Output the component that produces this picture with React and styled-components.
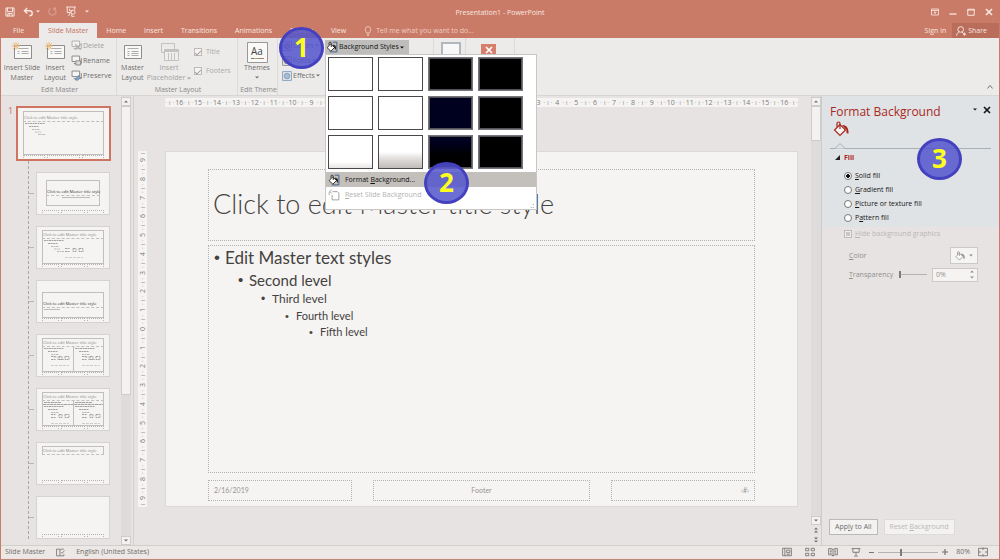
import { useState } from 'react';
import styled, { createGlobalStyle, css } from 'styled-components';

const TABS = ['File', 'Slide Master', 'Home', 'Insert', 'Transitions', 'Animations', 'Review', 'View'];

const SWATCHES = [
  '#fff', '#fff', '#000', '#000',
  '#fff', '#fff', '#00001f', '#000',
  'linear-gradient(#fff 80%, #e8e6e4)',
  'linear-gradient(#fff 50%, #e2dfdc 70%, #bfbcb9)',
  'linear-gradient(#00001f 20%, #000 60%)',
  '#000',
];

const FILLS = [
  ['', 'S', 'olid fill'],
  ['', 'G', 'radient fill'],
  ['', 'P', 'icture or texture fill'],
  ['P', 'a', 'ttern fill'],
];

const LAYOUTS = ['title', 'content', 'section', 'two', 'compare', 'titleOnly', 'blank'];

const TICK = '·\u00a0ı\u00a0·';

const range = (n) => Array.from({ length: n * 2 + 1 }, (_, i) => Math.abs(n - i));

/* Icons */

const Svg = ({ size = 14, w, h, box = '0 0 16 16', children, ...rest }) => (
  <svg width={w || size} height={h || size} viewBox={box} fill="none" stroke="currentColor" aria-hidden="true" {...rest}>
    {children}
  </svg>
);

const SaveIcon = () => (
  <Svg size={10} strokeWidth="1.6">
    <path d="M1.5 1.5h13v13h-13zM4 1.5v6h8v-6M4.5 14.5v-4h7v4M7 11v3" />
  </Svg>
);

const UndoIcon = () => (
  <Svg w={11} h={10} strokeWidth="2.2">
    <path d="M6 1.5L1.5 6 6 10.5M1.5 6h8c6 0 6 8 0 8" />
  </Svg>
);

const RedoIcon = () => (
  <Svg size={9} strokeWidth="1.8" opacity="0.35">
    <path d="M11 2.5a6.5 6.5 0 1 1-6.5 0M10.5 6V2h4" />
  </Svg>
);

const ShowIcon = () => (
  <Svg w={12} h={11} strokeWidth="1.4">
    <path d="M1 1.5h14M2.5 1.5v8h5M13.5 1.5v4M7 9.5l-2.5 5M6 4v3h4" />
    <circle cx="11" cy="9" r="3" />
    <path d="M9 12v3h4" />
  </Svg>
);

const BulbIcon = () => (
  <Svg size={10} strokeWidth="1.4">
    <path d="M5.5 11C5.5 9 3.5 8 3.5 5.5a4.5 4.5 0 0 1 9 0C12.5 8 10.5 9 10.5 11zM6 13h4M6.5 15h3" />
  </Svg>
);

const PersonIcon = () => (
  <Svg size={10} strokeWidth="1.6">
    <circle cx="7.5" cy="5.5" r="4.5" />
    <path d="M1 15.5c0-3 2-5.5 4.5-6M9.5 9.5l3 3M11 13h5M13.5 10.5v5" />
  </Svg>
);

const BucketIcon = ({ size = 12, edge = '#222', fill = '#fff', tip = '#1d1d1d' }) => (
  <Svg size={size} stroke={edge} strokeWidth="1.2">
    <path d="M7 3.5L1.5 9 7 14.5 12.5 9z" fill={fill} />
    <path d="M7 8V2.500c0-2-3-2-3 0v3.5" />
    <path d="M9 4c4 0 7 2.500 6.500 8.500-2 .5-2.500-1.500-2-3.500z" fill={tip} stroke="none" />
  </Svg>
);

const StylesIcon = () => (
  <Svg size={12} stroke="#333" strokeWidth="1.3">
    <path d="M9 1.5h5.5v13H5" stroke="#3f5f88" />
    <path d="M6 4L1.5 9 6.500 13.5 11.5 8.500z" fill="#fff" />
    <path d="M7 8V3c0-2-3-2-3 0v2" />
    <path d="M9 5c4 0 5 3 4 7l-2-3z" fill="#222" stroke="none" />
  </Svg>
);

const ResetIcon = () => (
  <Svg size={12} stroke="#9c9a99" strokeWidth="1.2">
    <path d="M6 3.5h6.5l2 2v9h-9V8M5 1L2.5 3.5 5 6M2.5 3.5C1 5 1 7 2.5 8.5" />
  </Svg>
);

const SlideIcon = ({ spark, lines = 3 }) => (
  <Svg w={21} h={19} box="0 0 21 19" stroke="#8f8d8b">
    <path d="M2.5 3.5h17v13h-17z" fill="#f8f8f7" />
    <path d="M5.5 6.5h11M5.5 9.5h2M9.5 9.5h7M5.5 11.5h2M9.5 11.5h7" opacity=".7" />
    {lines > 3 && <path d="M5.5 13.5h2M9.5 13.5h7" opacity=".7" />}
    {spark && <path d="M4 0v8M0 4h8M1 1l6 6M7 1L1 7" stroke="#eab978" />}
  </Svg>
);

const PlaceholderIcon = () => (
  <Svg w={21} h={19} box="0 0 21 19" stroke="#a9a7a5">
    <path d="M2.5 1.5h13v7M2.5 1.5v9h3" />
    <path d="M5.5 7.5h14v11h-14z" fill="#f2f1f0" />
    <path d="M5.5 9h14" strokeWidth="2" />
    <path d="M9.5 11v7M12.5 11v7M15.5 11v7" />
  </Svg>
);

const ThemesIcon = () => (
  <Svg w={21} h={21} box="0 0 21 21" stroke="#9a9896">
    <path d="M.5.5h20v20H.5z" fill="#f9f9f8" />
    <path d="M4 16.5h3" stroke="#777" />
    <path d="M7 16.5h3" stroke="#d69a63" />
    <path d="M10 16.5h3" stroke="#7d9b73" />
    <path d="M13 16.5h4" stroke="#b77" />
  </Svg>
);

const SmallIcon = ({ kind }) => (
  <Svg size={11} stroke="#8a8886" strokeWidth="1.4">
    <path d="M1.5 1.5h11v8h-11z" fill="#f6f5f4" />
    <path d="M4 12.5h11v-8" />
    {kind === 'delete' && <path d="M6 6l8 8M14 6l-8 8" strokeWidth="2" />}
    {kind === 'rename' && <path d="M7 8.5h7v6H7z" fill="#ddd" />}
    {kind === 'preserve' && <path d="M6 14l5-6 3 3-5 4z" fill="#86a9c9" stroke="#5f86ad" />}
  </Svg>
);

const EffectsIcon = ({ color = '#7f9cc0' }) => (
  <Svg size={10} stroke={color} strokeWidth="1.5">
    <path d="M1 1h14v14H1z" />
    <circle cx="8" cy="8" r="4.5" fill={color} fillOpacity=".6" />
  </Svg>
);

const WindowIcon = ({ kind }) => (
  <Svg size={8} strokeWidth="2.6">
    {kind === 'min' && <path d="M1 12h14" />}
    {kind === 'max' && <path d="M1.5 2.5h13v12h-13zM1 4h14" strokeWidth="2" />}
    {kind === 'close' && <path d="M2 2l12 12M14 2L2 14" strokeWidth="3.4" />}
    {kind === 'ribbon' && <path d="M1 2h14v12H1zM1 5h14M8 12V7.5M5.5 10L8 7.5l2.5 2.5" strokeWidth="1.7" />}
  </Svg>
);

const ViewIcon = ({ kind }) => (
  <Svg size={10} strokeWidth="1.3">
    {kind === 'normal' && <path d="M1 2h14v12H1zM4.5 2v12M7.5 5h5v4h-5zM7 11.5h6" />}
    {kind === 'sorter' && <path d="M1 2h5v4H1zM10 2h5v4h-5zM1 10h5v4H1zM10 10h5v4h-5z" />}
    {kind === 'reading' && <path d="M8 4v11M1 2.5h4L8 4l3-1.5h4v10h-4L8 14l-3-1.5H1zM3 5h3M3 7.5h3M3 10h3M10 5h3M10 7.5h3M10 10h3" />}
    {kind === 'show' && <path d="M1 2.5h14M3 2.5v6h10v-6M8 8.5v5M5 14.5h6" />}
    {kind === 'fit' && <path d="M1 2h14v12H1zM8 1v4M8 11v4M1 8h4M11 8h4" />}
  </Svg>
);

const BookIcon = () => (
  <Svg size={9} strokeWidth="1.4">
    <path d="M1 2h6v12H1zM7 4l2-2h5M7 14h7v-3M9 7.5l2 2 4-5" />
  </Svg>
);

const Caret = ({ up }) => (
  <Svg w={4} h={3} box="0 0 8 6" fill="currentColor" stroke="none">
    <path d={up ? 'M0 5h8L4 1z' : 'M0 1h8L4 5z'} />
  </Svg>
);

/* Slide thumbnails */

const ThumbLines = ({ kind }) => {
  if (kind === 'title' || kind === 'section') {
    return (
      <Svg w={60} h={4} box="0 0 60 4" stroke="#bbb">
        <path d={kind === 'title' ? 'M15 1.5h28' : 'M1 1.5h16'} />
      </Svg>
    );
  }
  const narrow = kind === 'two' || kind === 'compare';
  return (
    <Svg w={narrow ? 30 : 60} h={24} box={narrow ? '0 0 30 24' : '0 0 60 24'} stroke="#a5a3a1">
      {kind === 'compare' && <path d="M1 1.5h17M0 3.5h32" strokeDasharray="3 .5" />}
      <g transform={kind === 'compare' ? 'translate(0 4)' : ''}>
        <path d="M1 1.5h20M5 4.5h10" strokeDasharray="2 .5" />
        <path d="M8 7.5h8" opacity=".7" strokeDasharray="2 .5" />
        {kind !== 'compare' && <path d="M11 10h6M14 12.5h7" opacity=".7" strokeDasharray="2 .5" />}
        {kind !== 'master' && (
          <g transform={narrow ? 'translate(-14 0)' : ''}>
            <path d="M22 9.5h5M22 12.5h5M30 9.5h3v3h-3zM36 9.5h4v3h-4z" strokeDasharray="2 .5" />
            <path d="M22 18.5h18" opacity=".5" strokeDasharray="3 1" />
          </g>
        )}
      </g>
    </Svg>
  );
};

const Thumbnail = ({ kind, selected }) => (
  <ThumbSlide $selected={selected} $kind={kind}>
    {kind !== 'blank' && <ThumbTitle $kind={kind}>Click to edit Master title style</ThumbTitle>}
    {kind === 'titleOnly' || kind === 'blank' ? <ThumbGap /> : (
      <ThumbBody $kind={kind}>
        <ThumbBox><ThumbLines kind={kind} /></ThumbBox>
        {(kind === 'two' || kind === 'compare') && <ThumbBox><ThumbLines kind={kind} /></ThumbBox>}
      </ThumbBody>
    )}
    <ThumbFooter><i /><i /><i /></ThumbFooter>
  </ThumbSlide>
);

const Ruler = ({ count, vertical }) => (
  <RulerBar $vertical={vertical}>
    {range(count).flatMap((n, i) => [
      <RulerTick key={`tick${i}`}>{TICK}</RulerTick>,
      <RulerUnit key={i}>{n}</RulerUnit>,
    ])}
    <RulerTick>{TICK}</RulerTick>
  </RulerBar>
);

const ScrollBar = ({ thumb, paging }) => (
  <ScrollTrack>
    <ScrollButton aria-label="Scroll up"><Caret up /></ScrollButton>
    <ScrollThumb $size={thumb} />
    <ScrollSpace $size={100 - thumb} />
    <ScrollButton aria-label="Scroll down"><Caret /></ScrollButton>
    {paging && (
      <>
        <PageButton aria-label="Previous slide"><Caret up /><Caret up /></PageButton>
        <PageButton aria-label="Next slide"><Caret /><Caret /></PageButton>
      </>
    )}
  </ScrollTrack>
);

const App = () => {
  const [tab, setTab] = useState('Slide Master');
  const [fill, setFill] = useState(0);

  return (
    <>
      <GlobalStyle />
      <Window>
        <TitleBar>
          <QuickAccess>
            <IconButton aria-label="Save"><SaveIcon /></IconButton>
            <IconButton aria-label="Undo"><UndoIcon /><Caret /></IconButton>
            <IconButton aria-label="Redo"><RedoIcon /></IconButton>
            <IconButton aria-label="Start from beginning"><ShowIcon /></IconButton>
            <IconButton aria-label="Customize"><Caret /></IconButton>
          </QuickAccess>
          <DocTitle>Presentation1 - PowerPoint</DocTitle>
          <WindowButtons>
            {['ribbon', 'min', 'max', 'close'].map((kind) => (
              <IconButton key={kind} aria-label={kind}><WindowIcon kind={kind} /></IconButton>
            ))}
          </WindowButtons>
        </TitleBar>

        <TabBar>
          {TABS.map((name) => (
            <Tab key={name} $active={name === tab} onClick={() => setTab(name)}>{name}</Tab>
          ))}
          <TellMe><BulbIcon />Tell me what you want to do...</TellMe>
          <SignIn>Sign in</SignIn>
          <Share><PersonIcon />Share</Share>
        </TabBar>

        <Ribbon>
          <Group $width={116}>
            <GroupBody>
              <BigButton $width={38}><SlideIcon spark /><span>Insert Slide<br />Master</span></BigButton>
              <BigButton $width={28}><SlideIcon spark /><span>Insert<br />Layout</span></BigButton>
              <Stack>
                <SmallButton disabled><SmallIcon kind="delete" />Delete</SmallButton>
                <SmallButton><SmallIcon kind="rename" />Rename</SmallButton>
                <SmallButton><SmallIcon kind="preserve" />Preserve</SmallButton>
              </Stack>
            </GroupBody>
            <GroupName>Edit Master</GroupName>
          </Group>
          <Group $width={121}>
            <GroupBody>
              <BigButton $width={27}><SlideIcon lines={4} /><span>Master<br />Layout</span></BigButton>
              <BigButton $width={46} disabled><PlaceholderIcon /><span>Insert<br />Placeholder <Caret /></span></BigButton>
              <Checks>
                <CheckLabel><input type="checkbox" defaultChecked disabled />Title</CheckLabel>
                <CheckLabel><input type="checkbox" defaultChecked disabled />Footers</CheckLabel>
              </Checks>
            </GroupBody>
            <GroupName>Master Layout</GroupName>
          </Group>
          <Group $width={40}>
            <GroupBody>
              <BigButton $width={34}>
                <ThemeTile><ThemesIcon /><b>Aa</b></ThemeTile>
                <span>Themes</span>
                <ThemeCaret><Caret /></ThemeCaret>
              </BigButton>
            </GroupBody>
            <GroupName>Edit Theme</GroupName>
          </Group>
          <Group $width={156}>
            <GroupBody>
              <ThemeStack>
                <SmallButton><EffectsIcon color="#a86f86" />Colors <Caret /></SmallButton>
                <SmallButton><EffectsIcon color="#8b8a98" />Fonts <Caret /></SmallButton>
                <SmallButton><EffectsIcon />Effects <Caret /></SmallButton>
                <Badge $left={-1} $top={-13}>1</Badge>
              </ThemeStack>
              <MenuAnchor>
                <StylesButton><StylesIcon />Background Styles <Caret /></StylesButton>
                <Menu>
                  <SwatchGrid>
                    {SWATCHES.map((bg, i) => (
                      <Swatch key={i} $bg={bg} $dark={i % 4 > 1} aria-label={`Style ${i + 1}`} />
                    ))}
                  </SwatchGrid>
                  <MenuItem $active>
                    <StylesIcon /><span>Format <u>B</u>ackground...</span>
                    <Badge $left={98} $top={-10}>2</Badge>
                  </MenuItem>
                  <MenuItem disabled><ResetIcon /><span><u>R</u>eset Slide Background</span></MenuItem>
                  <Grip>.:</Grip>
                </Menu>
              </MenuAnchor>
            </GroupBody>
          </Group>
          <Group $width={32}>
            <SizeIcon />
          </Group>
          <Group $width={49}>
            <CloseMaster aria-label="Close Master View"><WindowIcon kind="close" /></CloseMaster>
          </Group>
          <Collapse aria-label="Collapse the ribbon">
            <Svg size={6} strokeWidth="2.6"><path d="M1 12l7-8 7 8" /></Svg>
          </Collapse>
        </Ribbon>

        <Work>
          <Thumbs>
            <ThumbNumber>1</ThumbNumber>
            <ThumbList>
              <Thumbnail kind="master" selected />
              <Tree>
                {LAYOUTS.map((kind) => <Branch key={kind}><Thumbnail kind={kind} /></Branch>)}
              </Tree>
            </ThumbList>
          </Thumbs>
          <ScrollBar thumb={67} />
          <Divider />

          <Canvas>
            <Ruler count={16} />
            <SlideRow>
              <Ruler count={9} vertical />
              <Slide>
                <TitleBox>Click to edit Master title style</TitleBox>
                <BodyBox>
                  <Level $size={17} $line={24} $indent={0}>Edit Master text styles</Level>
                  <Level $size={15} $line={20} $indent={24}>Second level</Level>
                  <Level $size={12} $line={18} $indent={47}>Third level</Level>
                  <Level $size={11} $line={16} $indent={71}>Fourth level</Level>
                  <Level $size={11} $line={16} $indent={95}>Fifth level</Level>
                </BodyBox>
                <FooterRow>
                  <FooterBox $align="left">2/16/2019</FooterBox>
                  <FooterBox $align="center">Footer</FooterBox>
                  <FooterBox $align="right">‹#›</FooterBox>
                </FooterRow>
              </Slide>
            </SlideRow>
          </Canvas>
          <ScrollBar thumb={8} paging />

          <Panel>
            <PanelTop>
              <PanelHeader>
                <h2>Format Background</h2>
                <IconButton aria-label="Task pane options"><Caret /></IconButton>
                <IconButton aria-label="Close"><WindowIcon kind="close" /></IconButton>
              </PanelHeader>
              <PanelTab aria-label="Fill"><BucketIcon size={16} edge="#a8281c" fill="#f4f4f4" tip="#a8281c" /></PanelTab>
              <PanelRule>
                <Svg w={10} h={6} box="0 0 10 6" stroke="#a9b0b5"><path d="M0 5.5l5-5 5 5" fill="#e0e3e6" /></Svg>
              </PanelRule>
              <SectionTitle>
                <Svg size={5} box="0 0 5 5" fill="#222" stroke="none"><path d="M5 0v5H0z" /></Svg>
                Fill
              </SectionTitle>
              {FILLS.map(([before, key, after], i) => (
                <RadioLabel key={i}>
                  <input type="radio" name="fill" checked={fill === i} onChange={() => setFill(i)} />
                  <span>{before}<u>{key}</u>{after}</span>
                </RadioLabel>
              ))}
              <Badge $left={95} $top={42}>3</Badge>
            </PanelTop>
            <HideLabel>
              <input type="checkbox" disabled />
              <span><u>H</u>ide background graphics</span>
            </HideLabel>
            <Field>
              <span><u>C</u>olor</span>
              <ColorButton aria-label="Color"><BucketIcon size={10} edge="#8b8987" tip="#8b8987" /><Caret /></ColorButton>
            </Field>
            <Field>
              <label htmlFor="transparency"><u>T</u>ransparency</label>
              <Slider id="transparency" type="range" defaultValue="0" />
              <Spin>
                <input aria-label="Transparency value" defaultValue="0%" />
                <SpinArrows><Caret up /><Caret /></SpinArrows>
              </Spin>
            </Field>
            <PanelButtons>
              <PanelButton>App<u>l</u>y to All</PanelButton>
              <PanelButton disabled>Reset <u>B</u>ackground</PanelButton>
            </PanelButtons>
          </Panel>
        </Work>

        <StatusBar>
          <span>Slide Master</span>
          <BookIcon />
          <span>English (United States)</span>
          <StatusRight>
            <Views>
              {['normal', 'sorter', 'reading', 'show'].map((kind) => (
                <IconButton key={kind} aria-label={kind}><ViewIcon kind={kind} /></IconButton>
              ))}
            </Views>
            <Zoom>
              <IconButton aria-label="Zoom out"><Svg size={5} strokeWidth="3"><path d="M0 8h16" /></Svg></IconButton>
              <Slider type="range" aria-label="Zoom" min="0" max="100" defaultValue="38" $wide />
              <IconButton aria-label="Zoom in"><Svg size={6} strokeWidth="3"><path d="M0 8h16M8 0v16" /></Svg></IconButton>
            </Zoom>
            <span>80%</span>
            <IconButton aria-label="Fit"><ViewIcon kind="fit" /></IconButton>
          </StatusRight>
        </StatusBar>
      </Window>
    </>
  );
};

// Styled Components
const GlobalStyle = createGlobalStyle`
  * {
    box-sizing: border-box;
  }

  body {
    margin: 0;
    background: #e6e3e2;
    font-family: "Open Sans", "Noto Sans", sans-serif;
    font-size: 7px;
    line-height: 10px;
    color: #6f6d6b;
  }

  button, input {
    margin: 0;
    padding: 0;
    border: 0;
    background: none;
    color: inherit;
    font: inherit;
  }

  svg {
    flex: none;
  }
`;

const Window = styled.div`
  display: flex;
  flex-direction: column;
  min-height: 100vh;
  border-left: 1px solid #c97b67;
  border-right: 1px solid #c97b67;
  border-bottom: 1px solid #b98a80;
`;

const TitleBar = styled.header`
  display: grid;
  grid-template-columns: 1fr auto 1fr;
  height: 23px;
  background: #c97b67;
  color: #f9e6e0;
`;

const IconButton = styled.button`
  display: flex;
  align-items: center;
  gap: 2px;
`;

const QuickAccess = styled.div`
  display: flex;
  align-items: center;
  gap: 8px;
  padding-left: 4px;
`;

const DocTitle = styled.div`
  align-self: end;
  line-height: 20px;
`;

const WindowButtons = styled.div`
  display: flex;
  justify-content: flex-end;
  align-items: center;
  gap: 10px;
  padding-right: 6px;
`;

const TabBar = styled.nav`
  display: flex;
  height: 15px;
  padding-left: 3px;
  background: #c97b67;
  color: #f9e6e0;
`;

const Tab = styled.button`
  padding: 0 9px;
  line-height: 15px;
  background: ${(props) => (props.$active ? '#ecebea' : 'none')};
  color: ${(props) => (props.$active ? '#c4705c' : 'inherit')};

  &:first-child {
    margin-right: 6px;
  }
`;

const TellMe = styled.button`
  display: flex;
  align-items: center;
  gap: 3px;
  margin-left: 8px;
  color: #f0cdc3;
`;

const SignIn = styled.button`
  margin-left: auto;
  padding: 0 6px;
`;

const Share = styled.button`
  display: flex;
  align-items: center;
  gap: 2px;
  padding: 0 12px 0 4px;
  background: #b96d5b;
`;

const Ribbon = styled.div`
  display: flex;
  height: 58px;
  background: #ecebea;
  border-bottom: 1px solid #d8d6d5;
`;

const Group = styled.section`
  display: flex;
  flex-direction: column;
  width: ${(props) => props.$width}px;
  padding: 2px 0 0 2px;
  border-right: 1px solid #dddbda;
`;

const GroupBody = styled.div`
  display: flex;
  flex: 1;
`;

const GroupName = styled.div`
  text-align: center;
  color: #8a8886;
  white-space: nowrap;
`;

const BigButton = styled.button`
  display: flex;
  flex-direction: column;
  align-items: center;
  width: ${(props) => props.$width}px;
  padding-top: 2px;
  white-space: nowrap;
  opacity: ${(props) => (props.disabled ? 0.6 : 1)};

  > svg {
    margin-bottom: 2px;
  }
`;

const ThemeTile = styled.div`
  display: grid;

  > * {
    grid-area: 1 / 1;
  }

  b {
    z-index: 1;
    font-size: 10px;
    line-height: 18px;
    font-weight: 400;
    text-align: center;
    color: #444;
  }
`;

const ThemeCaret = styled.span`
  display: flex;
  padding: 3px;
`;

const Stack = styled.div`
  display: flex;
  flex-direction: column;
  gap: 4px;
  padding-left: 2px;
`;

const ThemeStack = styled(Stack)`
  position: relative;
  width: 45px;
`;

const SmallButton = styled.button`
  display: flex;
  align-items: center;
  gap: 1px;
  height: 11px;
  white-space: nowrap;
  opacity: ${(props) => (props.disabled ? 0.6 : 1)};
`;

const checkbox = css`
  input {
    width: 8px;
    height: 8px;
    appearance: none;
    border: 1px solid #bdbbb9;
    background: #f5f4f3;
  }
`;

const Checks = styled.div`
  display: flex;
  flex-direction: column;
  gap: 9px;
  padding: 7px 0 0 2px;
`;

const CheckLabel = styled.label`
  display: flex;
  align-items: center;
  gap: 4px;
  color: #acaaa8;
  ${checkbox}

  input:checked {
    display: grid;
    place-items: center;
  }

  input:checked::before {
    content: '';
    width: 5px;
    height: 2px;
    border-left: 1px solid #a3a19f;
    border-bottom: 1px solid #a3a19f;
    transform: rotate(-45deg);
  }
`;

const MenuAnchor = styled.div`
  position: relative;
`;

const StylesButton = styled.button`
  display: flex;
  align-items: center;
  gap: 1px;
  width: 84px;
  height: 14px;
  padding-left: 1px;
  background: #bfbdbb;
  color: #111;
  white-space: nowrap;
`;

const Menu = styled.div`
  position: absolute;
  z-index: 5;
  top: 14px;
  left: 0;
  width: 212px;
  background: #fff;
  border: 1px solid #c9c7c5;
`;

const SwatchGrid = styled.div`
  display: grid;
  grid-template-columns: repeat(4, 45px);
  gap: 5px;
  padding: 2px 2px 3px;
`;

const Swatch = styled.button`
  height: 34px;
  border: 1px solid ${(props) => (props.$dark ? '#77757a' : '#4a4848')};
  background: ${(props) => props.$bg};
  box-shadow: ${(props) => (props.$dark ? 'inset 0 0 0 1px #55535a' : 'none')};
`;

const MenuItem = styled.button`
  position: relative;
  display: flex;
  align-items: center;
  gap: 5px;
  width: 100%;
  height: 15px;
  padding-left: 2px;
  background: ${(props) => (props.$active ? '#c3bfba' : 'none')};
  color: ${(props) => (props.disabled ? '#b3b1af' : '#111')};
`;

const Grip = styled.div`
  height: 7px;
  padding-right: 2px;
  line-height: 7px;
  text-align: right;
`;

const Badge = styled.span`
  position: absolute;
  z-index: 10;
  left: ${(props) => props.$left}px;
  top: ${(props) => props.$top}px;
  width: 45px;
  height: 42px;
  border: 3px solid #4441c0;
  border-radius: 50%;
  background: rgba(83, 85, 205, 0.85);
  color: #ffff1f;
  font: 700 26px/34px "Open Sans", sans-serif;
  text-align: center;
`;

const SizeIcon = styled.div`
  width: 20px;
  height: 13px;
  margin: 2px 0 0 5px;
  border: 2px solid #b0b7bd;
  border-bottom: 0;
  background: #f8f8f8;
`;

const CloseMaster = styled.button`
  width: 15px;
  height: 14px;
  margin: 4px 0 0 13px;
  background: #d67f6d;
  color: #fff;
`;

const Collapse = styled.button`
  align-self: end;
  margin-left: auto;
  padding: 0 6px 2px;
`;

const Work = styled.main`
  display: flex;
  flex: 1;
`;

const Thumbs = styled.div`
  display: flex;
  width: 120px;
  padding-top: 10px;
`;

const ThumbNumber = styled.span`
  width: 15px;
  padding-left: 7px;
  font-size: 9px;
  color: #d0705c;
`;

const ThumbList = styled.div`
  flex: 1;
`;

const Tree = styled.div`
  display: flex;
  flex-direction: column;
  gap: 11px;
  margin-left: 12px;
  padding-top: 11px;
  border-left: 1px dashed #aaa8a6;
`;

const Branch = styled.div`
  display: flex;
  align-items: center;

  &::before {
    content: '';
    width: 5px;
    margin-right: 2px;
    border-top: 1px solid #b9b7b5;
  }
`;

const thumbPadding = {
  title: '7px 5px 1px',
  section: '11px 5px 1px',
};

const thumbTitleHeight = {
  title: 16,
  section: 16,
  master: 11,
};

const ThumbSlide = styled.div`
  display: flex;
  flex-direction: column;
  width: ${(props) => (props.$selected ? 95 : 74)}px;
  height: ${(props) => (props.$selected ? 55 : 43)}px;
  padding: ${(props) => thumbPadding[props.$kind] || '3px 5px 1px'};
  border: ${(props) => (props.$selected ? '2px solid #cf7461' : '1px solid #d5d3d2')};
  background: #f5f4f3;
  font-size: 4px;
  line-height: 7px;
`;

const ThumbTitle = styled.div`
  display: flex;
  align-items: end;
  height: ${(props) => thumbTitleHeight[props.$kind] || 9}px;
  margin: ${(props) => (props.$kind === 'title' ? '0 4px' : '0')};
  border: 1px solid #c1bfbd;
  border-bottom-style: dashed;
  color: ${(props) => (props.$kind === 'title' || props.$kind === 'section' ? '#333' : '#8a8886')};
  white-space: nowrap;
`;

const ThumbBody = styled.div`
  display: flex;
  flex: 1;
  min-height: 0;
  margin: ${(props) => (props.$kind === 'title' ? '0 4px 4px' : '0')};
`;

const ThumbBox = styled.div`
  flex: 1;
  min-width: 0;
  overflow: hidden;
  border: 1px solid #c1bfbd;
  border-top: 0;

  & + & {
    border-left: 0;
  }

  svg {
    display: block;
  }
`;

const ThumbGap = styled.div`
  flex: 1;
`;

const ThumbFooter = styled.div`
  display: grid;
  grid-template-columns: 2fr 3fr 2fr;
  gap: 2px;
  height: 3px;

  i {
    border: 1px dotted #b5b3b1;
    border-bottom: 0;
  }
`;

const ScrollTrack = styled.div`
  display: flex;
  flex-direction: column;
  width: 10px;
  padding-top: 1px;
  background: #dedcdb;
`;

const ScrollButton = styled.button`
  display: flex;
  align-items: center;
  justify-content: center;
  height: 9px;
  border: 1px solid #cfcdcb;
  background: #f3f2f1;
`;

const ScrollThumb = styled.div`
  flex: ${(props) => props.$size} 0 0;
  border: 1px solid #cfcdcb;
  background: #f3f2f1;
`;

const ScrollSpace = styled.div`
  flex: ${(props) => props.$size} 0 0;
`;

const PageButton = styled.button`
  display: flex;
  flex-direction: column;
  align-items: center;
  justify-content: center;
  height: 10px;
  background: #e6e3e2;
`;

const Divider = styled.div`
  width: 3px;
  border-right: 1px solid #d2d0cf;
`;

const Canvas = styled.div`
  display: flex;
  flex: 1;
  flex-direction: column;
  gap: 44px;
  min-width: 0;
  padding: 2px 13px 0 4px;
`;

const RulerBar = styled.div`
  display: flex;
  background: #f5f4f3;
  color: #7d7b79;
  line-height: 9px;

  ${(props) => (props.$vertical ? css`
    width: 9px;
    writing-mode: vertical-rl;
    transform: rotate(180deg);

    > :first-child,
    > :last-child {
      flex-grow: 0.5;
    }
  ` : css`
    height: 9px;
    margin-left: 27px;
  `)}
`;

const RulerUnit = styled.span`
  display: flex;
  flex: 1 1 0;
  justify-content: center;
  min-width: 0;
  min-height: 0;
  overflow: hidden;
`;

const RulerTick = styled(RulerUnit)`
  color: #a19f9d;
`;

const SlideRow = styled.div`
  display: flex;
  gap: 18px;
`;

const Slide = styled.article`
  display: flex;
  flex: 1;
  flex-direction: column;
  aspect-ratio: 16 / 9;
  padding: 17px 42px 5px;
  border: 1px solid #dbd9d8;
  background: #f5f4f3;
  color: #444240;
  font-family: Lato, "Open Sans", sans-serif;
`;

const TitleBox = styled.h1`
  height: 72px;
  margin: 0 0 4px;
  padding-left: 4px;
  border: 1px dotted #b3b1af;
  font-size: 27px;
  font-weight: 300;
  line-height: 68px;
`;

const BodyBox = styled.ul`
  flex: 1;
  margin: 0 0 7px;
  padding: 0 5px;
  border: 1px dotted #b3b1af;
  list-style: none;
`;

const Level = styled.li`
  display: flex;
  margin-left: ${(props) => props.$indent}px;
  font-size: ${(props) => props.$size}px;
  line-height: ${(props) => props.$line}px;

  &::before {
    content: '•';
    width: 11px;
    font-family: "Liberation Sans", sans-serif;
  }
`;

const FooterRow = styled.div`
  display: grid;
  grid-template-columns: 2fr 3fr 2fr;
  gap: 21px;
`;

const FooterBox = styled.div`
  height: 21px;
  padding: 0 5px;
  border: 1px dotted #b3b1af;
  color: #979593;
  font-size: 7px;
  line-height: 19px;
  text-align: ${(props) => props.$align};
`;

const Panel = styled.aside`
  display: flex;
  flex-direction: column;
  width: 178px;
  border-left: 1px solid #cfcdcc;
`;

const PanelTop = styled.div`
  position: relative;
  padding: 7px 8px 2px;
  background: #e0e3e6;
  color: #161616;
`;

const PanelHeader = styled.div`
  display: flex;
  align-items: start;
  gap: 6px;

  h2 {
    flex: 1;
    margin: 0;
    color: #a8281c;
    font-size: 12px;
    font-weight: 400;
    line-height: 18px;
    white-space: nowrap;
  }

  button {
    height: 13px;
  }
`;

const PanelTab = styled.button`
  display: block;
  height: 16px;
  margin-left: 3px;
`;

const PanelRule = styled.div`
  height: 12px;
  padding: 6px 0 0 5px;
  border-bottom: 1px solid #a9b0b5;

  svg {
    display: block;
  }
`;

const SectionTitle = styled.h3`
  display: flex;
  align-items: center;
  gap: 4px;
  height: 17px;
  margin: 0 0 3px;
  padding-left: 5px;
  color: #a8281c;
  font-size: 7px;
  font-weight: 700;
`;

const RadioLabel = styled.label`
  display: flex;
  align-items: center;
  gap: 3px;
  height: 14px;
  padding-left: 14px;

  input {
    width: 8px;
    height: 8px;
    appearance: none;
    border: 1px solid #777;
    border-radius: 50%;
    background: #fff;
  }

  input:checked {
    background: radial-gradient(#111 45%, #fff 50%);
  }
`;

const HideLabel = styled.label`
  display: flex;
  align-items: center;
  gap: 3px;
  height: 14px;
  padding-left: 22px;
  margin-bottom: 5px;
  color: #b9b7b5;
  ${checkbox}

  input {
    box-shadow: inset 0 0 0 1px #f0efee;
    background: #c9c7c5;
  }
`;

const Field = styled.div`
  display: flex;
  align-items: center;
  justify-content: space-between;
  height: 19px;
  padding: 0 21px 0 27px;
  color: #92908e;
`;

const ColorButton = styled.button`
  display: flex;
  align-items: center;
  justify-content: center;
  gap: 4px;
  width: 28px;
  height: 17px;
  border: 1px solid #cbc9c7;
  background: #f5f4f3;
`;

const Slider = styled.input`
  width: ${(props) => (props.$wide ? 60 : 28)}px;
  height: 8px;
  appearance: none;
  background: linear-gradient(#b5b3b1, #b5b3b1) center / 100% 1px no-repeat;

  &::-webkit-slider-thumb {
    width: 2px;
    height: 7px;
    appearance: none;
    background: #7d7b79;
  }
`;

const Spin = styled.div`
  display: flex;
  align-items: center;
  width: 46px;
  height: 14px;
  padding: 0 3px;
  border: 1px solid #cbc9c7;
  background: #f5f4f3;

  input {
    flex: 1;
    min-width: 0;
  }
`;

const SpinArrows = styled.span`
  display: flex;
  flex-direction: column;
  gap: 3px;
`;

const PanelButtons = styled.div`
  display: flex;
  gap: 6px;
  margin-top: auto;
  padding: 0 7px 10px;
`;

const PanelButton = styled.button`
  height: 16px;
  padding: 0 5px;
  border: 1px solid ${(props) => (props.disabled ? '#dedcdb' : '#bbb9b7')};
  background: #f3f2f1;
  color: ${(props) => (props.disabled ? '#bab8b6' : '#6f6d6b')};
`;

const StatusBar = styled.footer`
  display: flex;
  align-items: center;
  gap: 11px;
  height: 14px;
  padding: 0 11px 0 4px;
  border-top: 1px solid #d2d0cf;
  border-bottom: 1px solid #f6dfda;
  background: #ebe8e6;
`;

const StatusRight = styled.div`
  display: flex;
  align-items: center;
  gap: 8px;
  margin-left: auto;
`;

const Views = styled.div`
  display: flex;
  gap: 13px;
`;

const Zoom = styled.div`
  display: flex;
  align-items: center;
  gap: 4px;
`;

export default App;
